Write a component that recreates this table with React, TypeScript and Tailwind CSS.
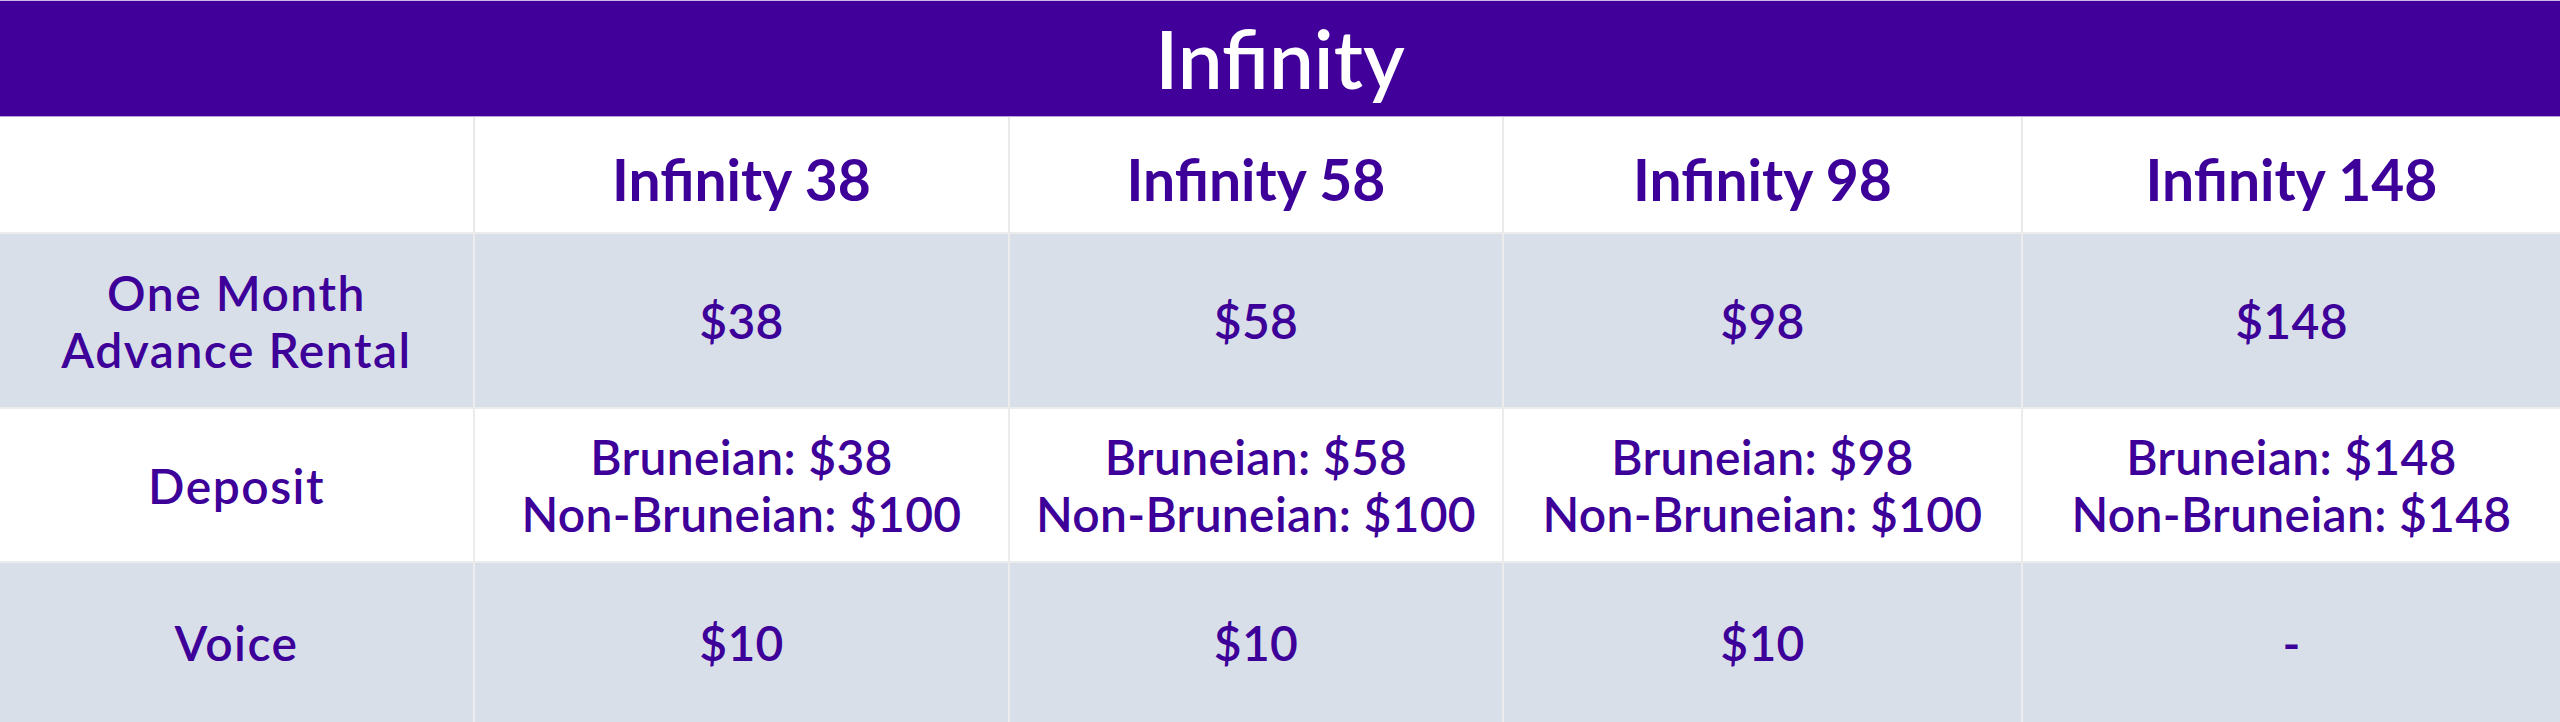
import React from "react";

const cols = ["Infinity 38", "Infinity 58", "Infinity 98", "Infinity 148"];

const rows: { label: React.ReactNode; cells: React.ReactNode[]; gray: boolean; h: string }[] = [
  {
    label: (
      <>
        One Month
        <br />
        Advance Rental
      </>
    ),
    cells: ["$38", "$58", "$98", "$148"],
    gray: true,
    h: "h-[175px]",
  },
  {
    label: "Deposit",
    cells: [
      ["Bruneian: $38", "Non-Bruneian: $100"],
      ["Bruneian: $58", "Non-Bruneian: $100"],
      ["Bruneian: $98", "Non-Bruneian: $100"],
      ["Bruneian: $148", "Non-Bruneian: $148"],
    ].map((l, i) => (
      <React.Fragment key={i}>
        {l[0]}
        <br />
        {l[1]}
      </React.Fragment>
    )),
    gray: false,
    h: "h-[154px]",
  },
  {
    label: "Voice",
    cells: ["$10", "$10", "$10", "-"],
    gray: true,
    h: "h-[161px]",
  },
];

export default function App() {
  return (
    <div
      className="w-[2560px] h-[722px] bg-white overflow-hidden text-[#3d0099]"
      style={{ fontFamily: "Lato, 'Open Sans', sans-serif" }}
    >
      <div className="h-[117px] bg-[#400099] border-t border-[#c9b8e8] border-b border-b-[#b9a3e0] flex items-center justify-center">
        <span className="text-white text-[80px] font-semibold leading-none pb-[2px]">Infinity</span>
      </div>
      <div className="grid grid-cols-[475px_535px_494px_519px_537px]">
        <div className="h-[115px] bg-white border-r-2 border-[#e9e9e9]" />
        {cols.map((c, i) => (
          <div
            key={c}
            className={`h-[115px] bg-white flex items-center justify-center pt-[10px] text-[57px] font-bold leading-none ${
              i < 3 ? "border-r-2 border-[#e9e9e9]" : ""
            }`}
          >
            {c}
          </div>
        ))}
        {rows.map((r, ri) => (
          <React.Fragment key={ri}>
            <div
              className={`${r.h} ${r.gray ? "bg-[#d8dfe9]" : "bg-white"} border-r-2 border-t-2 border-[#ececec] flex items-center justify-center text-center text-[48px] font-semibold leading-[57px] tracking-[1.5px]`}
            >
              <div>{r.label}</div>
            </div>
            {r.cells.map((c, ci) => (
              <div
                key={ci}
                className={`${r.h} ${r.gray ? "bg-[#d8dfe9]" : "bg-white"} border-t-2 border-[#ececec] ${
                  ci < 3 ? "border-r-2" : ""
                } flex items-center justify-center text-center text-[48px] font-semibold leading-[57px] tracking-[0.3px]`}
              >
                <div>{c}</div>
              </div>
            ))}
          </React.Fragment>
        ))}
      </div>
    </div>
  );
}
